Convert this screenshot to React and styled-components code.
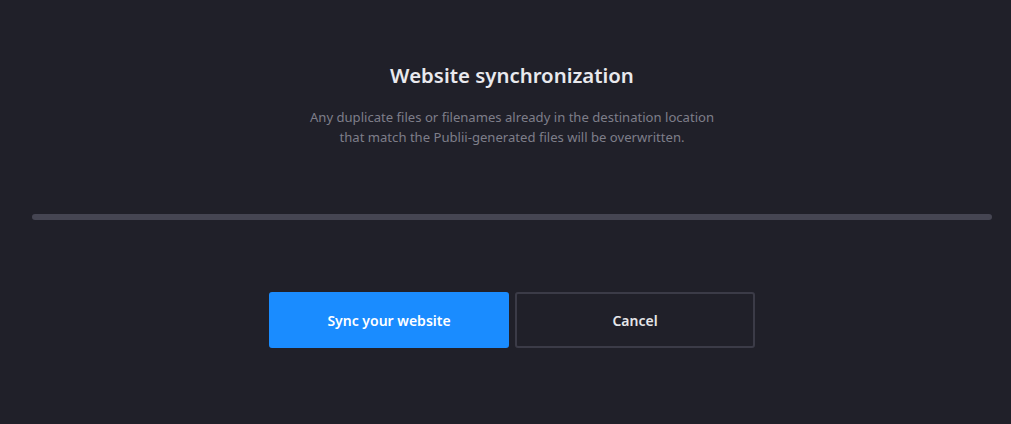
import React from "react";
import styled, { createGlobalStyle } from "styled-components";

const Global = createGlobalStyle`
  html, body { margin: 0; padding: 0; background: #202029; }
  body { font-family: "Noto Sans", "Open Sans", sans-serif; }
`;

const Page = styled.div`
  width: 1011px;
  height: 424px;
  background: #202029;
  display: flex;
  flex-direction: column;
  align-items: center;
  box-sizing: border-box;
  padding: 61px 0 0 13px;
`;

const Title = styled.h1`
  margin: 0;
  font-size: 20.4px;
  font-weight: 600;
  line-height: 28px;
  color: #e9e9ee;
`;

const Description = styled.p`
  margin: 18px 0 0;
  font-size: 13.1px;
  line-height: 20px;
  color: #7e7e89;
  text-align: center;
`;

const Progress = styled.div`
  align-self: stretch;
  margin: 67px 19px 0 19px;
  height: 6px;
  border-radius: 3px;
  background: #454552;
`;

const Actions = styled.div`
  display: flex;
  gap: 6px;
  margin-top: 72px;
`;

const Button = styled.button`
  width: 240px;
  height: 56px;
  box-sizing: border-box;
  border-radius: 3px;
  font-family: inherit;
  font-size: 14px;
  font-weight: 600;
  cursor: pointer;
  color: ${(p) => (p.$primary ? "#ffffff" : "#e6e6ea")};
  background: ${(p) => (p.$primary ? "#1a8cff" : "#202029")};
  border: 2px solid ${(p) => (p.$primary ? "#1a8cff" : "#3b3b47")};
`;

export default function App() {
  return (
    <>
      <Global />
      <Page>
        <Title>Website synchronization</Title>
        <Description>
          Any duplicate files or filenames already in the destination location
          <br />
          that match the Publii-generated files will be overwritten.
        </Description>
        <Progress />
        <Actions>
          <Button $primary>Sync your website</Button>
          <Button>Cancel</Button>
        </Actions>
      </Page>
    </>
  );
}
